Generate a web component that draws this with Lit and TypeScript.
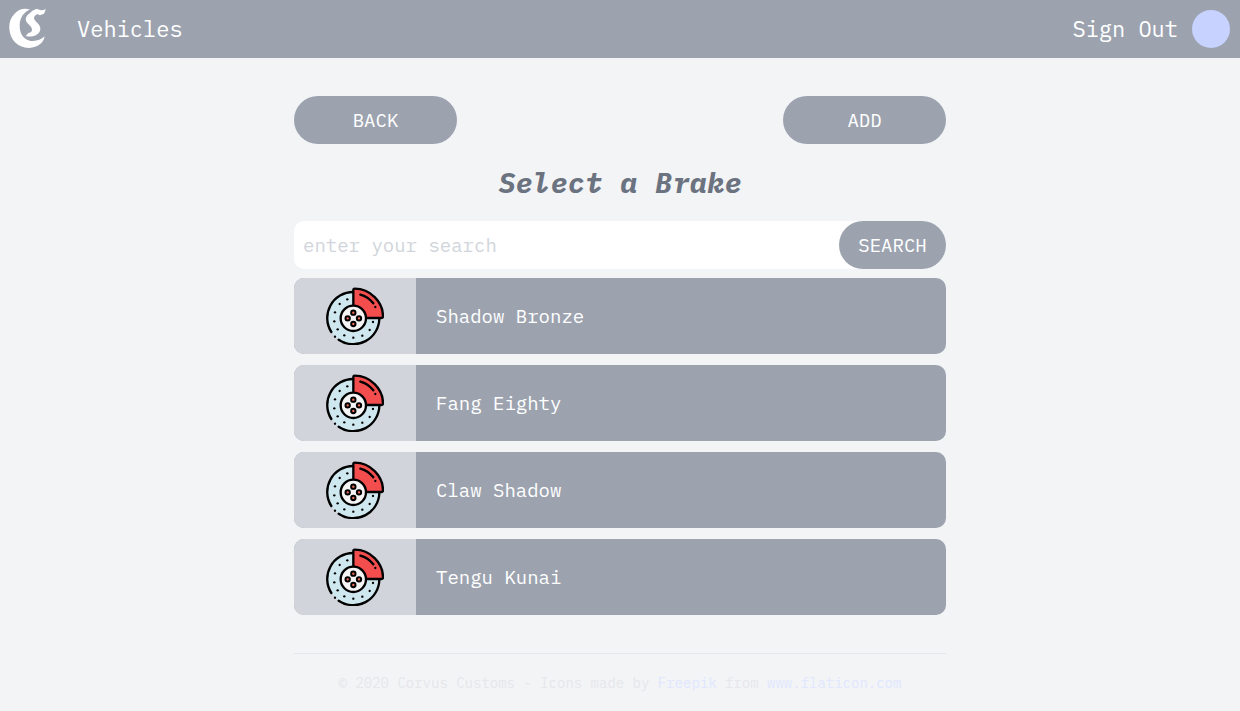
import { LitElement, html, css, svg } from "lit";
import { customElement, property } from "lit/decorators.js";

const holes = [
  [96, 59], [73, 73], [59, 98], [57, 125], [67, 149], [87, 167],
  [114, 174], [141, 168], [163, 151], [173, 127],
];
const bolts = [[114, 99], [97, 116], [131, 116], [114, 133]];

@customElement("brake-icon")
class BrakeIcon extends LitElement {
  static styles = css`
    :host { display: block; }
    svg { display: block; width: 58px; height: 58px; }
    .disc { fill: #cfe7ef; }
    .line { fill: none; stroke: #000; stroke-width: 7; stroke-linecap: round; stroke-linejoin: round; }
    .caliper { fill: #f44d4d; }
    .hub { fill: #f4f4f4; }
    .bolt { fill: #f3705a; stroke: #000; stroke-width: 6; }
  `;
  render() {
    return html`<svg viewBox="32 22 174 174" aria-hidden="true">
      <circle class="disc" cx="114" cy="115" r="78" />
      <path class="line" d="M192 115A78 78 0 0 1 70 180M114 37A78 78 0 0 0 48 157" />
      <circle cx="59" cy="171" r="3.5" />
      ${holes.map(([x, y]) => svg`<circle cx=${x} cy=${y} r="3.5"/>`)}
      <path class="line caliper" d="M114 31Q114 27 118 27C165 27 203 67 203 110Q203 115 198 115H114Z" />
      <path class="line" d="M135 45Q158 51 174 71" />
      <circle cx="180" cy="82" r="3.5" />
      <circle class="line hub" cx="114" cy="116" r="38" />
      ${bolts.map(([x, y]) => svg`<circle class="bolt" cx=${x} cy=${y} r="6.5"/>`)}
    </svg>`;
  }
}

@customElement("part-row")
class PartRow extends LitElement {
  @property() name = "";
  static styles = css`
    :host { display: block; }
    .row {
      display: flex; height: 76px; border-radius: 10px; overflow: hidden;
      background: #9ca3af; color: #fff; text-decoration: none;
    }
    .thumb { width: 122px; flex: none; display: grid; place-items: center; background: #d1d5db; }
    .name { align-self: center; padding: 0 20px; }
  `;
  render() {
    return html`<a class="row" href="#">
      <span class="thumb"><brake-icon></brake-icon></span>
      <span class="name">${this.name}</span>
    </a>`;
  }
}

@customElement("app-root")
class AppRoot extends LitElement {
  parts = ["Shadow Bronze", "Fang Eighty", "Claw Shadow", "Tengu Kunai"];

  static styles = css`
    :host {
      display: block; min-height: 100vh; background: #f3f4f6; color: #fff;
      font: 19px/28px "IBM Plex Mono", "Liberation Mono", monospace;
    }
    * { box-sizing: border-box; }
    a { text-decoration: none; }
    .nav {
      display: flex; align-items: center; height: 58px; padding: 0 10px 0 9px;
      background: #9ca3af; font-size: 22px;
    }
    .nav a { color: #fff; }
    .logo { display: block; width: 38px; height: 42px; margin-right: 30px; }
    .logo svg { display: block; width: 38px; height: 40px; fill: #fff; }
    .user { display: flex; align-items: center; gap: 14px; margin-left: auto; }
    .avatar { width: 38px; height: 38px; border-radius: 50%; background: #c7d2fe; }
    .page { max-width: 652px; margin: 0 auto; padding-top: 38px; }
    .actions { display: flex; justify-content: space-between; }
    button {
      height: 48px; border: 0; border-radius: 24px; background: #9ca3af; color: #fff;
      font: inherit; cursor: pointer; padding: 0;
    }
    .action { width: 25%; }
    h1 {
      margin: 19px 0; text-align: center; color: #6b7280;
      font-size: 29px; line-height: 39px; font-style: italic; font-weight: 700;
    }
    .search { display: flex; background: #fff; border-radius: 10px 24px 24px 10px; }
    input {
      flex: 1; min-width: 0; height: 48px; border: 0; padding: 0 9px; background: none;
      font: inherit; color: #6b7280; outline: 0;
    }
    input::placeholder { color: #d1d5db; opacity: 1; }
    .go { width: 107px; }
    .list { display: grid; gap: 11px; margin: 9px 0 38px; padding: 0; list-style: none; }
    footer {
      border-top: 1px solid #e5e7eb; padding: 19px 0; text-align: center;
      color: #e5e7eb; font-size: 14px; line-height: 20px;
    }
    footer a { color: #e0e7ff; }
  `;

  render() {
    return html`
      <nav class="nav">
        <a class="logo" href="#" aria-label="Corvus Customs">
          <svg viewBox="14 15 114 120" aria-hidden="true">
            <path d="M77 20C60 14 42 19 30 33C18 45 14 61 15 77C17 111 41 134 74 135C101 134 118 119 121 100C109 112 92 116 76 113C55 108 46 91 46 67C46 44 60 25 77 20Z" />
            <path d="M125 19C115 23 107 22 98 17C90 19 83 23 77 30C67 37 62 45 65 54C69 63 84 70 83 81C82 88 77 90 73 89L64 99C83 105 107 96 108 78C109 62 88 54 89 44C90 38 96 34 101 33C106 41 112 33 118 33C121 31 121 26 125 19Z" />
          </svg>
        </a>
        <a href="#">Vehicles</a>
        <div class="user"><a href="#">Sign Out</a><span class="avatar"></span></div>
      </nav>
      <main class="page">
        <div class="actions">
          <button class="action" type="button">BACK</button>
          <button class="action" type="button">ADD</button>
        </div>
        <h1>Select a Brake</h1>
        <form class="search" @submit=${(e: Event) => e.preventDefault()}>
          <input type="text" aria-label="Search brakes" placeholder="enter your search" />
          <button class="go">SEARCH</button>
        </form>
        <ul class="list">
          ${this.parts.map((p) => html`<li><part-row .name=${p}></part-row></li>`)}
        </ul>
        <footer>
          © 2020 Corvus Customs - Icons made by <a href="#">Freepik</a> from
          <a href="#">www.flaticon.com</a>
        </footer>
      </main>
    `;
  }
}
